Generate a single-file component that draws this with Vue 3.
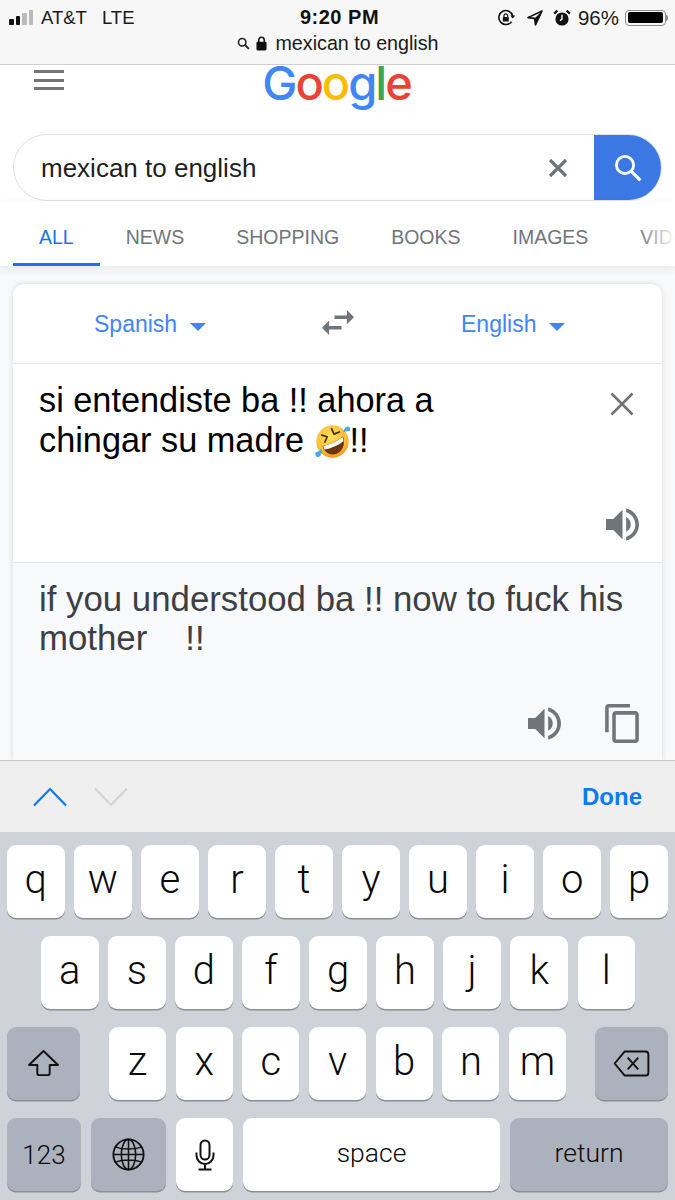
<script setup>
const row1 = ['q', 'w', 'e', 'r', 't', 'y', 'u', 'i', 'o', 'p']
const row2 = ['a', 's', 'd', 'f', 'g', 'h', 'j', 'k', 'l']
const row3 = ['z', 'x', 'c', 'v', 'b', 'n', 'm']
const tabs = ['ALL', 'NEWS', 'SHOPPING', 'BOOKS', 'IMAGES', 'VIDEOS']
const speaker = 'M3 9v6h4l5 5V4L7 9H3zm13.5 3c0-1.77-1.02-3.29-2.5-4.03v8.05c1.48-.73 2.5-2.25 2.5-4.02zM14 3.23v2.06c2.89.86 5 3.54 5 6.71s-2.11 5.85-5 6.71v2.06c4.01-.91 7-4.49 7-8.77s-2.99-7.86-7-8.77z'
</script>

<template>
  <div class="phone">
    <header class="chrome">
      <div class="status">
        <div class="status-left">
          <span class="signal"><i class="on h1"></i><i class="on h2"></i><i class="h3"></i><i class="h4"></i></span>
          <span class="carrier">AT&amp;T</span>
          <span class="net">LTE</span>
        </div>
        <div class="clock">9:20 PM</div>
        <div class="status-right">
          <svg class="st-lock" viewBox="0 0 18 18" width="18" height="18">
            <path d="M14.6 12.6A7 7 0 1 1 15.7 7" fill="none" stroke="#111" stroke-width="1.6" />
            <path d="M13.2 6.6h5l-2.5 3z" fill="#111" />
            <rect x="5.8" y="8" width="6" height="4.6" rx=".7" fill="#111" />
            <path d="M7 8V6.6a1.8 1.8 0 0 1 3.6 0V8" fill="none" stroke="#111" stroke-width="1.2" />
          </svg>
          <svg class="st-loc" viewBox="0 0 16 16" width="16" height="16">
            <path d="M15 1 1 7.6l6.6.8.9 6.6z" fill="none" stroke="#111" stroke-width="1.6" stroke-linejoin="round" />
            <path d="M15 1 7.6 8.4l.9 6.6z" fill="#111" />
          </svg>
          <svg class="st-alarm" viewBox="0 0 18 18" width="18" height="18">
            <circle cx="9" cy="10" r="6.6" fill="#111" />
            <path d="M1.2 4.6 4.4 1.6M16.8 4.6l-3.2-3" stroke="#111" stroke-width="2.2" />
            <path d="M9 5.8V10l-2 1.6" fill="none" stroke="#fff" stroke-width="1.4" />
          </svg>
          <span class="pct">96%</span>
          <span class="battery"><i></i></span>
          <span class="nub"></span>
        </div>
      </div>
      <div class="url">
        <svg viewBox="0 0 14 14" width="13" height="13">
          <circle cx="5.6" cy="5.6" r="4" fill="none" stroke="#222" stroke-width="1.7" />
          <path d="m8.6 8.6 4.2 4.2" stroke="#222" stroke-width="2" />
        </svg>
        <svg class="lock" viewBox="0 0 12 16" width="11" height="15">
          <rect x="0.5" y="6" width="11" height="9.5" rx="1.4" fill="#111" />
          <path d="M3 6.5V4.2a3 3 0 0 1 6 0v2.3" fill="none" stroke="#111" stroke-width="1.7" />
        </svg>
        <span>mexican to english</span>
      </div>
    </header>

    <main class="page">
      <div class="gbar">
        <div class="burger"><i></i><i></i><i></i></div>
        <div class="logo"><span class="b">G</span><span class="r">o</span><span class="y">o</span><span class="b">g</span><span class="g">l</span><span class="r">e</span></div>
      </div>

      <div class="search-wrap">
        <div class="search">
          <span class="query">mexican to english</span>
          <svg class="clear" viewBox="0 0 20 20" width="20" height="20">
            <path d="M2 2l16 16M18 2 2 18" stroke="#70757a" stroke-width="3.2" />
          </svg>
          <div class="go">
            <svg viewBox="0 0 30 30" width="30" height="30">
              <circle cx="12" cy="12" r="8.6" fill="none" stroke="#fff" stroke-width="2.8" />
              <path d="m18.4 18.4 9 9" stroke="#fff" stroke-width="3.2" />
            </svg>
          </div>
        </div>
      </div>

      <nav class="tabs">
        <span v-for="(t, i) in tabs" :key="t" class="tab" :class="{ active: i === 0 }">{{ t }}</span>
        <span class="fade"></span>
      </nav>

      <section class="card">
        <div class="langs">
          <div class="lang lang-a">Spanish<i class="caret"></i></div>
          <svg class="swap" viewBox="3 5 18 14" width="32" height="25">
            <path d="M6.99 11 3 15l3.99 4v-3H14v-2H6.99v-3zM21 9l-3.99-4v3H10v2h7.01v3L21 9z" fill="#70757a" />
          </svg>
          <div class="lang lang-b">English<i class="caret"></i></div>
        </div>

        <div class="pane source">
          <div class="pane-top">
            <p class="src-text">si entendiste ba !! ahora a<br />chingar su madre <svg class="emoji" viewBox="0 0 36 36" width="35" height="35">
                <defs>
                  <radialGradient id="face" cx="45%" cy="35%" r="70%">
                    <stop offset="0" stop-color="#ffdf57" />
                    <stop offset=".7" stop-color="#fbbd34" />
                    <stop offset="1" stop-color="#ee8c1c" />
                  </radialGradient>
                </defs>
                <circle cx="18" cy="18" r="16.6" fill="url(#face)" />
                <g fill="none" stroke="#4a2c12" stroke-width="1.8" stroke-linecap="round" stroke-linejoin="round">
                  <path d="M7 11.5l5.6 1.6-2.4 5.4" />
                  <path d="M17 4.8l2.6 5.6 5.4-2.2" />
                </g>
                <path d="M7.6 22.6C14 21.8 23 17.6 28.8 12.6c2.6 8.6-.2 15-6.4 18-6 2.6-12.6-1-14.8-8z" fill="#6d3410" />
                <path d="M8.4 22.6C14.6 21.6 23 17.8 28.4 13.4c.6 1.6.8 3 .8 4.4-5.4 4.2-13 7.6-19.4 8.4-.6-1-1-2.4-1.4-3.6z" fill="#fff" />
                <path d="M.6 29.2c2.6-.6 5-2.4 6.2-3.8.6 3.4-.4 8-3.4 8.6C.8 34.2-.2 31.4.6 29.2z" fill="#4aa8ec" />
                <path d="M35.6 7.2c-2.4-.2-5.2 .6-6.6 1.6.6-3.2 2.4-6.4 5-6.2 2.4 .2 2.8 2.6 1.6 4.6z" fill="#4aa8ec" />
              </svg>!!</p>
            <svg class="close" viewBox="0 0 24 24" width="24" height="24">
              <path d="M1.5 1.5l21 21M22.5 1.5l-21 21" stroke="#70757a" stroke-width="2.6" />
            </svg>
          </div>
          <div class="pane-actions">
            <svg viewBox="3 3 18 18" width="33" height="33"><path :d="speaker" fill="#70757a" /></svg>
          </div>
        </div>

        <div class="pane target">
          <p class="dst-text">if you understood ba !! now to fuck his<br />mother<span class="blank"></span>!!</p>
          <div class="pane-actions actions-b">
            <svg viewBox="3 3 18 18" width="33" height="33"><path :d="speaker" fill="#70757a" /></svg>
            <svg viewBox="2 1 19 22" width="34" height="39">
              <path d="M16 1H4c-1.1 0-2 .9-2 2v14h2V3h12V1zm3 4H8c-1.1 0-2 .9-2 2v14c0 1.1.9 2 2 2h11c1.1 0 2-.9 2-2V7c0-1.1-.9-2-2-2zm0 16H8V7h11v14z" fill="#70757a" />
            </svg>
          </div>
        </div>
      </section>
    </main>

    <div class="toolbar">
      <svg viewBox="0 0 34 20" width="34" height="20">
        <path d="M1 18.5 17 2l16 16.5" fill="none" stroke="#0a7bf0" stroke-width="2.2" />
      </svg>
      <svg class="down" viewBox="0 0 34 20" width="34" height="20">
        <path d="M1 1.5 17 18 33 1.5" fill="none" stroke="#d3d4d6" stroke-width="2.2" />
      </svg>
      <span class="done">Done</span>
    </div>

    <div class="keyboard">
      <div class="row row1">
        <div v-for="k in row1" :key="k" class="key">{{ k }}</div>
      </div>
      <div class="row row2">
        <div v-for="k in row2" :key="k" class="key">{{ k }}</div>
      </div>
      <div class="row row3">
        <div class="key fn shift">
          <svg viewBox="0 0 34 30" width="33" height="29">
            <path d="M17 2 2 16.5h8.6v8.2c0 1.4.8 2.3 2.2 2.3h8.4c1.4 0 2.2-.9 2.2-2.3v-8.2H32z" fill="none" stroke="#111" stroke-width="2" stroke-linejoin="round" />
          </svg>
        </div>
        <div class="letters">
          <div v-for="k in row3" :key="k" class="key">{{ k }}</div>
        </div>
        <div class="key fn del">
          <svg viewBox="0 0 38 28" width="37" height="27">
            <path d="M12 1.5h21.5c1.8 0 3 1.2 3 3v19c0 1.8-1.2 3-3 3H12L1.5 14z" fill="none" stroke="#111" stroke-width="2" stroke-linejoin="round" />
            <path d="m15 8 11 12M26 8 15 20" stroke="#111" stroke-width="2" />
          </svg>
        </div>
      </div>
      <div class="row row4">
        <div class="key fn k123">123</div>
        <div class="key fn globe">
          <svg viewBox="0 0 34 34" width="33" height="33" fill="none" stroke="#111" stroke-width="1.6">
            <circle cx="17" cy="17" r="15.6" stroke-width="1.9" />
            <ellipse cx="17" cy="17" rx="7.4" ry="15.6" />
            <path d="M17 1.4v31.2M1.4 17h31.2M4 9.4c7 2.6 19 2.6 26 0M4 24.6c7-2.6 19-2.6 26 0" />
          </svg>
        </div>
        <div class="key mic">
          <svg viewBox="0 0 20 32" width="20" height="32" fill="none" stroke="#111" stroke-width="2">
            <rect x="5.5" y="1.5" width="9" height="19" rx="4.5" />
            <path d="M1.5 13.5v3a8.5 8.5 0 0 0 17 0v-3M10 25v5M3.5 30.5h13" />
          </svg>
        </div>
        <div class="key space">space</div>
        <div class="key fn ret">return</div>
      </div>
    </div>
  </div>
</template>

<style>
html, body { margin: 0; background: #fff; }
</style>

<style scoped>
.phone {
  width: 675px;
  height: 1200px;
  overflow: hidden;
  display: flex;
  flex-direction: column;
  font-family: "Liberation Sans", Arial, sans-serif;
  background: #f8f9fa;
}
.chrome {
  height: 65px;
  flex: none;
  box-sizing: border-box;
  background: #f7f7f7;
  border-bottom: 1px solid #cfcfd1;
  padding-top: 5px;
}
.status {
  height: 25px;
  display: grid;
  grid-template-columns: 1fr auto 1fr;
  align-items: center;
  font-size: 18.5px;
  color: #1a1a1a;
  padding: 0 7px 0 9px;
}
.status-left { display: flex; align-items: center; }
.signal { display: flex; align-items: flex-end; gap: 2px; height: 15px; width: 24px; }
.signal i { width: 4.5px; background: #b9b9b9; border-radius: 1px; }
.signal i.on { background: #111; }
.h1 { height: 6px; }
.h2 { height: 9px; }
.h3 { height: 12px; }
.h4 { height: 15px; }
.carrier { margin-left: 8px; }
.net { margin-left: 15px; }
.clock { font-weight: 700; font-size: 20px; letter-spacing: .5px; color: #111; padding-left: 2px; }
.status-right { display: flex; align-items: center; justify-content: flex-end; }
.st-loc { margin-left: 12px; }
.st-alarm { margin-left: 10px; }
.pct { margin-left: 7px; font-size: 20.5px; }
.battery {
  margin-left: 6px;
  width: 41px;
  height: 16px;
  box-sizing: border-box;
  border: 1.5px solid #8c8c8c;
  border-radius: 4px;
  padding: 1.5px;
  display: flex;
}
.battery i { flex: 1; background: #000; border-radius: 2px; margin-right: 1px; }
.nub { width: 2px; height: 6px; background: #8c8c8c; border-radius: 0 2px 2px 0; }
.url {
  height: 26px;
  display: flex;
  align-items: center;
  justify-content: center;
  font-size: 19.7px;
  color: #1a1a1a;
  padding-left: 1px;
}
.lock { margin-left: 6px; margin-right: 8px; }

.page {
  flex: 1;
  min-height: 0;
  overflow: hidden;
  display: flex;
  flex-direction: column;
}
.gbar {
  height: 69px;
  flex: none;
  background: #fff;
  display: grid;
  grid-template-columns: 1fr auto 1fr;
  overflow: hidden;
}
.burger { padding: 5px 0 0 34px; display: flex; flex-direction: column; gap: 5.7px; }
.burger i { width: 30px; height: 3px; background: #757575; }
.logo {
  font-family: Inter, sans-serif;
  font-weight: 500;
  font-size: 47px;
  line-height: 36px;
  letter-spacing: -2px;
  height: 36px;
  padding-right: 2px;
}
.b { color: #4285f4; }
.r { color: #ea4335; }
.y { color: #fbbc05; }
.g { color: #34a853; }

.search-wrap { background: #fff; padding: 0 13px; flex: none; }
.search {
  height: 67px;
  box-sizing: border-box;
  border: 1.5px solid #dfe1e5;
  border-radius: 34px;
  display: flex;
  align-items: center;
  padding-left: 27px;
  overflow: hidden;
}
.query { flex: 1; font-size: 26px; color: #1f1f1f; padding-top: 2px; }
.clear { margin-right: 26px; }
.go {
  width: 69px;
  height: 67px;
  margin-right: -1.5px;
  background: #3c78e4;
  display: flex;
  align-items: center;
  justify-content: center;
  flex: none;
}

.tabs {
  height: 65px;
  flex: none;
  background: #fff;
  display: flex;
  padding-left: 13px;
  box-shadow: 0 3px 8px rgba(60, 64, 67, .09);
  position: relative;
  overflow: hidden;
  white-space: nowrap;
}
.tab {
  padding: 21px 26px 0;
  font-size: 19.5px;
  line-height: 30px;
  color: #70757a;
  box-sizing: border-box;
  flex: none;
}
.tab.active { color: #1a73e8; border-bottom: 3px solid #1a73e8; }
.fade {
  position: absolute;
  right: 0;
  top: 0;
  bottom: 0;
  width: 36px;
  background: linear-gradient(to right, rgba(255, 255, 255, 0), #fff);
}

.card {
  margin: 18px 13px 0;
  flex: none;
  height: 476px;
  background: #fff;
  border-radius: 11px 11px 0 0;
  box-shadow: 0 0 5px rgba(60, 64, 67, .18);
  display: flex;
  flex-direction: column;
  overflow: hidden;
}
.langs {
  height: 79px;
  flex: none;
  display: flex;
  align-items: center;
  border-bottom: 1px solid #e3e5e8;
  padding: 0 0 0 81px;
}
.lang { color: #4285f4; font-size: 23px; display: flex; align-items: center; padding-top: 2px; }
.lang-a { width: 228px; }
.lang-b { margin-left: 107px; }
.caret {
  width: 0;
  height: 0;
  border-left: 8px solid transparent;
  border-right: 8px solid transparent;
  border-top: 8px solid #4285f4;
  margin-left: 13px;
  margin-top: 4px;
}
.swap { margin-top: -3px; }
.pane { display: flex; flex-direction: column; padding-left: 26px; }
.source { height: 198px; flex: none; border-bottom: 1px solid #e3e5e8; }
.target { flex: 1; background: #f8f9fa; }
.pane-top { display: flex; justify-content: space-between; }
.src-text, .dst-text { margin: 0; }
.src-text { color: #000; padding-top: 16px; font-size: 34.3px; line-height: 40px; }
.dst-text { color: #3c4043; padding-top: 16px; font-size: 34.8px; line-height: 39px; }
.blank { display: inline-block; width: 38px; }
.emoji { vertical-align: -7px; margin-left: 1px; }
.close { margin: 28px 28px 0 0; flex: none; }
.pane-actions {
  margin-top: auto;
  display: flex;
  justify-content: flex-end;
  align-items: center;
  padding: 0 23px 21px 0;
}
.actions-b { gap: 44px; padding-bottom: 17px; }

.toolbar {
  height: 72px;
  flex: none;
  box-sizing: border-box;
  border-top: 1px solid #c7c8ca;
  background: #efeff0;
  display: flex;
  align-items: center;
  padding: 0 33px;
}
.down { margin-left: 27px; }
.done { margin-left: auto; color: #0a7bf0; font-size: 24px; font-weight: 700; }

.keyboard {
  height: 368px;
  flex: none;
  box-sizing: border-box;
  background: #ced2d9;
  padding: 13px 7px 0;
  display: flex;
  flex-direction: column;
  gap: 18px;
}
.row { display: flex; height: 73px; flex: none; }
.row1 { justify-content: space-between; }
.row1 .key { width: 57.5px; }
.row2 { justify-content: space-between; padding: 0 33px 0 34px; }
.row2 .key { width: 57.5px; }
.row3 { justify-content: space-between; }
.letters { display: flex; gap: 9.7px; }
.letters .key { width: 57px; }
.row4 { gap: 10px; }
.key {
  background: #fff;
  border-radius: 9px;
  box-shadow: 0 1.5px 0 #8b8e94;
  color: #0a0a0a;
  font-family: Roboto, "Liberation Sans", sans-serif;
  font-weight: 300;
  font-size: 40px;
  display: flex;
  align-items: center;
  justify-content: center;
  box-sizing: border-box;
  padding-bottom: 4px;
}
.fn { background: #acb2bd; }
.shift, .del { width: 73px; padding-bottom: 0; }
.k123 { width: 74px; font-size: 26px; padding-bottom: 0; }
.globe { width: 75px; padding-bottom: 0; }
.mic { width: 57px; padding-bottom: 0; }
.space { width: 257px; font-size: 26.5px; }
.ret { width: 158px; font-size: 26.5px; }
</style>
